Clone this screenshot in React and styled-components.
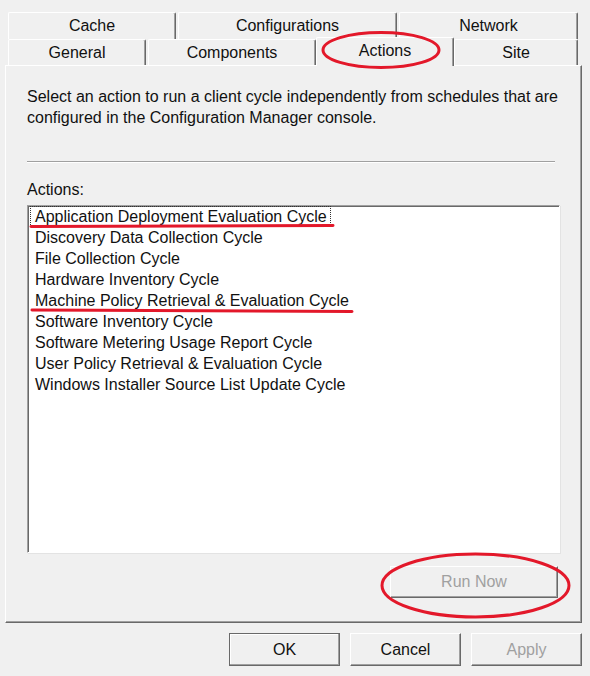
import React from 'react';
import styled, { createGlobalStyle } from 'styled-components';

const GlobalStyle = createGlobalStyle`
body {
    margin: 0;
    background: #f0f0f0;
    font-family: "Liberation Sans", Arial, sans-serif;
    color: #111;
}
`;

const topTabs = [
    { label: 'Cache', width: 168 },
    { label: 'Configurations', width: 219 },
    { label: 'Network', width: 179 },
];

const bottomTabs = [
    { label: 'General', width: 138 },
    { label: 'Components', width: 168 },
    { label: 'Actions', width: 134, selected: true },
    { label: 'Site', width: 124 },
];

const actions = [
    'Application Deployment Evaluation Cycle',
    'Discovery Data Collection Cycle',
    'File Collection Cycle',
    'Hardware Inventory Cycle',
    'Machine Policy Retrieval & Evaluation Cycle',
    'Software Inventory Cycle',
    'Software Metering Usage Report Cycle',
    'User Policy Retrieval & Evaluation Cycle',
    'Windows Installer Source List Update Cycle',
];

const App = () => {
    return (
        <Window>
            <GlobalStyle />

            <TabRow $height={27}>
                {topTabs.map((t) => (
                    <Tab key={t.label} $width={t.width}>{t.label}</Tab>
                ))}
            </TabRow>
            <TabRow $height={26}>
                {bottomTabs.map((t) => (
                    <Tab key={t.label} $width={t.width} $selected={t.selected}>{t.label}</Tab>
                ))}
            </TabRow>

            <Panel>
                <Description>
                    Select an action to run a client cycle independently from schedules that are<br />
                    configured in the Configuration Manager console.
                </Description>
                <Separator />

                <FieldLabel>Actions:</FieldLabel>
                <ListBox>
                    {actions.map((a, i) => (
                        <ListItem key={a} $focused={i === 0}>{a}</ListItem>
                    ))}
                </ListBox>

                <PanelActions>
                    <Button $width={168} $height={32} disabled>Run Now</Button>
                </PanelActions>
            </Panel>

            <DialogButtons>
                <Button $default>OK</Button>
                <Button>Cancel</Button>
                <Button disabled>Apply</Button>
            </DialogButtons>

            {/* red markup drawn over the screenshot */}
            <Annotations width="590" height="676" viewBox="0 0 590 676">
                <ellipse cx="381" cy="50" rx="58" ry="17.5" />
                <path d="M31 226.5 C120 226 240 226 333 225.5" />
                <path d="M32 310 C140 310.5 250 311 352 311.5" />
                <ellipse cx="475.5" cy="585.5" rx="93.5" ry="31.5" />
            </Annotations>
        </Window>
    );
};

export default App;


const Window = styled.div`
position: relative;
width: 590px;
height: 676px;
padding-top: 12px;
box-sizing: border-box;
`;

const TabRow = styled.div`
display: flex;
align-items: flex-start;
gap: 2px;
height: ${(p) => p.$height}px;
margin-left: 8px;
`;

const Tab = styled.div`
position: relative;
z-index: ${(p) => (p.$selected ? 2 : 1)};
box-sizing: border-box;
width: ${(p) => p.$width + (p.$selected ? 4 : 0)}px;
height: ${(p) => (p.$selected ? 'calc(100% + 3px)' : '100%')};
margin: ${(p) => (p.$selected ? '-2px -2px -1px' : '0')};
display: flex;
align-items: center;
justify-content: center;
padding-bottom: ${(p) => (p.$selected ? 2 : 0)}px;
background: #f0f0f0;
border-top: 1px solid #fff;
border-left: 1px solid #fff;
border-right: 1px solid #696969;
border-radius: 2px 2px 0 0;
box-shadow: inset -1px 0 #a0a0a0;
font-size: 16px;
color: #111;
`;

const Panel = styled.div`
box-sizing: border-box;
width: 577px;
height: 558px;
margin-left: 5px;
padding: 20px 0 0 21px;
border-top: 1px solid #fff;
border-left: 1px solid #fff;
border-right: 1px solid #696969;
border-bottom: 1px solid #696969;
box-shadow: inset -1px -1px 0 #a0a0a0;
`;

const Description = styled.p`
margin: 0;
font-size: 16px;
line-height: 21px;
`;

const Separator = styled.div`
width: 528px;
margin-top: 33px;
border-top: 1px solid #a0a0a0;
border-bottom: 1px solid #fff;
`;

const FieldLabel = styled.div`
margin-top: 16px;
font-size: 16px;
line-height: 21px;
`;

const ListBox = styled.div`
box-sizing: border-box;
width: 533px;
height: 348px;
margin-top: 5px;
padding: 0 2px;
background: #fff;
border-top: 1px solid #a0a0a0;
border-left: 1px solid #a0a0a0;
border-right: 1px solid #fff;
border-bottom: 1px solid #fff;
box-shadow: inset 1px 1px 0 #696969, 1px 1px 0 #e3e3e3;
`;

const ListItem = styled.div`
width: fit-content;
padding: 0 3px 0 4px;
font-size: 16px;
line-height: 20px;
height: 21px;
box-sizing: border-box;
border: 1px dotted ${(p) => (p.$focused ? '#333' : 'transparent')};
white-space: nowrap;
`;

const PanelActions = styled.div`
display: flex;
justify-content: flex-end;
width: 531px;
margin-top: 13px;
`;

const Button = styled.button`
box-sizing: border-box;
width: ${(p) => p.$width || 111}px;
height: ${(p) => p.$height || 33}px;
padding: 0;
background: #f0f0f0;
font-family: "Liberation Sans", Arial, sans-serif;
font-size: 16px;
color: #111;
border-top: 1px solid ${(p) => (p.$default ? '#696969' : '#fff')};
border-left: 1px solid ${(p) => (p.$default ? '#696969' : '#fff')};
border-right: 1px solid #696969;
border-bottom: 1px solid #696969;
box-shadow: inset -1px -1px 0 #a0a0a0 ${(p) => (p.$default ? ', inset 1px 1px 0 #fff' : '')};

&:disabled {
    color: #a0a0a0;
}
`;

const DialogButtons = styled.div`
display: flex;
justify-content: flex-end;
gap: 10px;
margin-top: 10px;
padding-right: 8px;
`;

const Annotations = styled.svg`
position: absolute;
left: 0;
top: 0;
z-index: 10;
pointer-events: none;
fill: none;
stroke: #e3182a;
stroke-width: 3;
stroke-linecap: round;
`;
